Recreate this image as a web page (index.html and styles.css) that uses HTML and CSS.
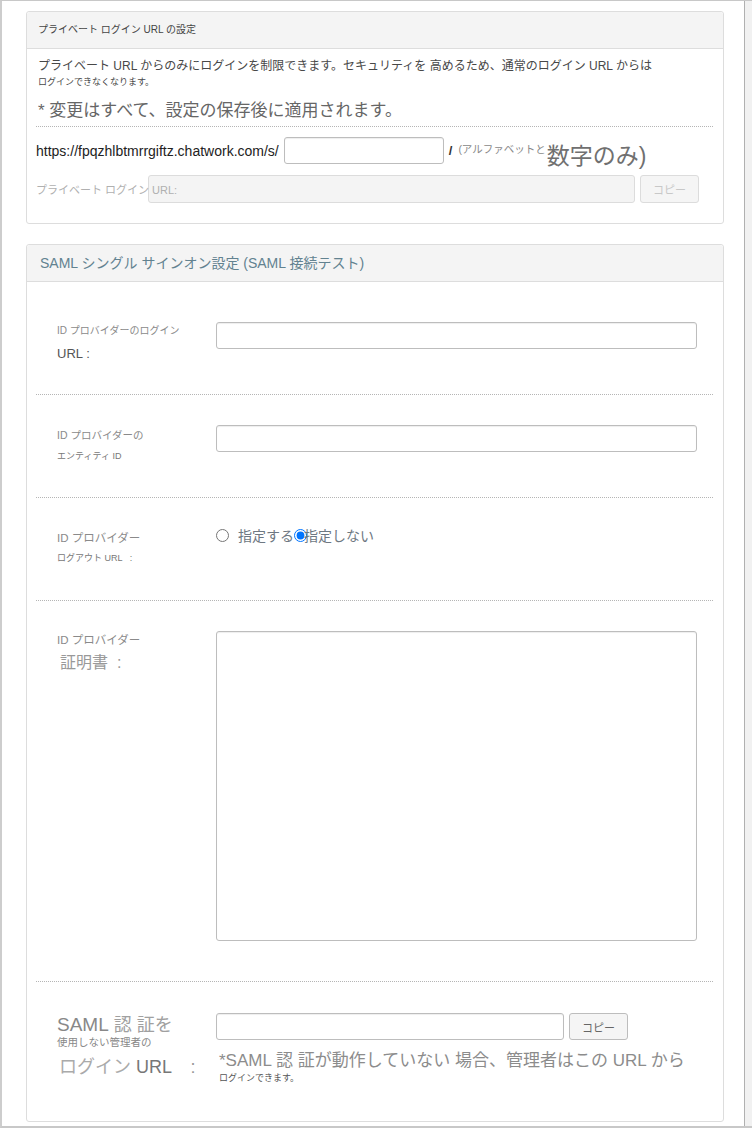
FILE: index.html
```html
<!DOCTYPE html>
<html lang="ja">
<head>
<meta charset="utf-8">
<title>SAML設定</title>
<link rel="stylesheet" href="styles.css">
</head>
<body>
<div class="frame">
  <div class="main">
    <section class="panel">
      <div class="panel-head">プライベート ログイン URL の設定</div>
      <div class="panel-body private-body">
        <div class="desc">プライベート URL からのみにログインを制限できます。セキュリティを 高めるため、通常のログイン URL からは</div>
        <div class="desc-sm">ログインできなくなります。</div>
        <div class="notice">* 変更はすべて、設定の保存後に適用されます。</div>
        <div class="url-row">
          <span class="base-url">https://fpqzhlbtmrrgiftz.chatwork.com/s/</span>
          <input class="input input-slug" type="text">
          <span class="slash">/</span>
          <span class="hint-sm">(アルファベットと</span>
          <span class="hint-lg">数字のみ)</span>
        </div>
        <div class="private-row">
          <span class="private-label">プライベート ログイン URL:</span>
          <input class="input input-disabled" type="text" disabled>
          <button class="btn btn-disabled" type="button" disabled>コピー</button>
        </div>
      </div>
    </section>

    <section class="panel panel-saml">
      <div class="panel-head saml-head">SAML シングル サインオン設定 (SAML 接続テスト)</div>
      <div class="panel-body saml-body">
        <div class="form-row row-login">
          <div class="label">
            <div class="l-login1">ID プロバイダーのログイン</div>
            <div class="l-login2">URL :</div>
          </div>
          <div class="control"><input class="input input-full" type="text"></div>
        </div>

        <div class="form-row row-entity">
          <div class="label">
            <div class="l-entity1">ID プロバイダーの</div>
            <div class="l-entity2">エンティティ ID</div>
          </div>
          <div class="control"><input class="input input-full" type="text"></div>
        </div>

        <div class="form-row row-logout">
          <div class="label">
            <div class="l-logout1">ID プロバイダー</div>
            <div class="l-logout2">ログアウト URL &nbsp;&nbsp;:</div>
          </div>
          <div class="control radios">
            <input class="radio radio-a" type="radio" name="logout" id="r1"><label class="radio-text" for="r1">指定する</label><input class="radio radio-b" type="radio" name="logout" id="r2" checked><label class="radio-text" for="r2">指定しない</label>
          </div>
        </div>

        <div class="form-row row-cert">
          <div class="label">
            <div class="l-cert1">ID プロバイダー</div>
            <div class="l-cert2">証明書 &nbsp;:</div>
          </div>
          <div class="control"><textarea class="input textarea"></textarea></div>
        </div>

        <div class="form-row row-admin">
          <div class="label">
            <div class="l-admin1"><span class="saml">SAML</span> 認 証を</div>
            <div class="l-admin2">使用しない管理者の</div>
            <div class="l-admin3">ログイン <span class="url-b">URL</span> <span class="colon">:</span></div>
          </div>
          <div class="control">
            <div class="admin-line">
              <input class="input input-admin" type="text">
              <button class="btn" type="button">コピー</button>
            </div>
            <div class="note">*SAML 認 証が動作していない 場合、管理者はこの URL から</div>
            <div class="note-sm">ログインできます。</div>
          </div>
        </div>
      </div>
    </section>
  </div>
  <div class="scrollbar"></div>
</div>
</body>
</html>
```

FILE: styles.css
```css
* { box-sizing: border-box; }

html, body {
  margin: 0;
  padding: 0;
  background: #fff;
}

body {
  font-family: "Liberation Sans", "Noto Sans CJK JP", sans-serif;
  color: #333;
}

.frame {
  width: 752px;
  height: 1128px;
  display: flex;
  border-top: 1px solid #c8c8c8;
  border-left: 2px solid #cdcdcd;
  border-bottom: 2px solid #c8c8c8;
}

.main {
  flex: 1;
  padding: 10px 20px 0 24px;
}

.scrollbar {
  width: 8px;
  background: #f1f1f1;
  border-left: 1px solid #b0b0b0;
}

.panel {
  border: 1px solid #dddddd;
  border-radius: 3px;
  background: #fff;
}

.panel-saml {
  margin-top: 20px;
}

.panel-head {
  height: 37px;
  padding-left: 11px;
  background: #f4f4f4;
  border-bottom: 1px solid #dddddd;
  border-radius: 3px 3px 0 0;
  font-size: 10px;
  line-height: 36px;
  color: #444;
  white-space: nowrap;
}

.saml-head {
  padding-left: 13px;
  font-size: 14px;
  color: #628290;
}

.panel-body {
  padding: 0 10px 0 9px;
}

/* ---------- private URL panel ---------- */
.private-body {
  padding-bottom: 21px;
}

.desc {
  margin-top: 8px;
  padding-left: 2px;
  font-size: 12px;
  line-height: 18px;
  color: #484848;
  white-space: nowrap;
}

.desc-sm {
  padding-left: 2px;
  font-size: 9px;
  line-height: 14px;
  color: #484848;
}

.notice {
  margin-top: 10px;
  padding: 0 0 3px 2px;
  font-size: 17px;
  line-height: 24px;
  color: #666;
  border-bottom: 1px dotted #b5b5b5;
}

.url-row {
  margin-top: 10px;
  height: 27px;
  display: flex;
  align-items: center;
  white-space: nowrap;
}

.base-url {
  font-size: 14px;
  color: #222;
}

.input {
  height: 27px;
  border: 1px solid #bdbdbd;
  border-radius: 3px;
  background: #fff;
  box-shadow: inset 0 1px 1px rgba(0, 0, 0, 0.07);
  font: inherit;
  padding: 0 6px;
  outline: none;
}

.input-slug {
  width: 160px;
  margin-left: 5px;
}

.slash {
  margin-left: 5px;
  font-size: 13px;
  font-weight: bold;
  color: #333;
}

.hint-sm {
  margin: 0 0 4px 6px;
  font-size: 10.5px;
  color: #888;
}

.hint-lg {
  margin: 6px 0 0 1px;
  font-size: 23px;
  color: #707070;
}

.private-row {
  margin-top: 11px;
  height: 27px;
  display: flex;
  align-items: center;
}

.private-label {
  position: relative;
  z-index: 1;
  width: 112px;
  flex: none;
  white-space: nowrap;
  font-size: 11px;
  color: #b0b0b0;
}

.input-disabled {
  width: 487px;
  height: 28px;
  background: #f4f4f4;
  border-color: #dcdcdc;
  box-shadow: none;
}

.btn {
  width: 59px;
  height: 27px;
  margin-left: 5px;
  padding: 0;
  border: 1px solid #bdbdbd;
  border-radius: 3px;
  background: #f5f5f5;
  font-family: "Liberation Sans", "Noto Sans CJK JP", sans-serif;
  font-size: 11px;
  color: #666;
}

.btn-disabled {
  height: 28px;
  border-color: #dcdcdc;
  color: #c8c8c8;
}

/* ---------- SAML panel ---------- */
.form-row {
  display: flex;
  padding-top: 30px;
  height: 103px;
  border-bottom: 1px dotted #b5b5b5;
}

.row-login {
  padding-top: 40px;
  height: 113px;
}

.row-cert {
  height: 381px;
}

.row-admin {
  border-bottom: none;
  padding-top: 31px;
  height: 139px;
}

.label {
  width: 180px;
  flex: none;
  padding-left: 21px;
  color: #8a8a8a;
  white-space: nowrap;
}

.control {
  width: 481px;
}

.input-full {
  width: 481px;
}

.l-login1 { font-size: 10px; line-height: 18px; }
.l-login2 { font-size: 13px; line-height: 28px; color: #555; }

.l-entity1 { font-size: 10.5px; line-height: 20px; }
.l-entity2 { font-size: 9px; line-height: 22px; color: #777; }

.l-logout1 { font-size: 11.5px; line-height: 20px; }
.l-logout2 { font-size: 9px; line-height: 20px; color: #777; }

.radios {
  display: flex;
  align-items: center;
  height: 14px;
}

.radio {
  width: 13px;
  height: 13px;
  margin: 0;
  flex: none;
}

.radio-a {
  margin-right: 9px;
}

.radio-b {
  margin-right: -3px;
}

.radio-text {
  font-size: 14px;
  color: #6e7882;
}

.l-cert1 { font-size: 11.5px; line-height: 18px; }
.l-cert2 { font-size: 16px; line-height: 28px; padding-left: 3px; color: #999; }

.textarea {
  display: block;
  width: 481px;
  height: 310px;
  resize: none;
  padding: 6px;
}

.l-admin1 { font-size: 18px; line-height: 24px; color: #a0a0a0; }
.l-admin1 .saml { font-size: 19px; color: #888; }
.l-admin2 { font-size: 10.5px; line-height: 10px; color: #888; }
.l-admin3 { margin-top: 6px; padding-left: 2px; font-size: 18px; line-height: 28px; color: #aaa; }
.l-admin3 .url-b { color: #777; }
.l-admin3 .colon { margin-left: 14px; color: #999; }

.admin-line {
  display: flex;
  align-items: center;
}

.input-admin {
  width: 348px;
}

.note {
  margin-top: 11px;
  padding-left: 3px;
  font-size: 17px;
  line-height: 20px;
  color: #8c8c8c;
  white-space: nowrap;
}

.note-sm {
  padding-left: 3px;
  font-size: 9px;
  line-height: 14px;
  color: #555;
}
```
